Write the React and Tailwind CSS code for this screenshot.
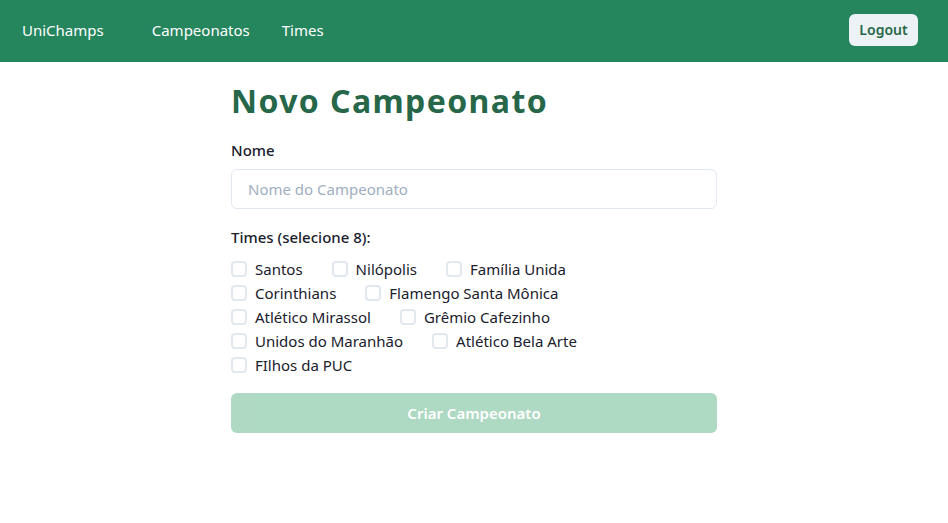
import React, { useState } from 'react';

const rows = [
  ['Santos', 'Nilópolis', 'Família Unida'],
  ['Corinthians', 'Flamengo Santa Mônica'],
  ['Atlético Mirassol', 'Grêmio Cafezinho'],
  ['Unidos do Maranhão', 'Atlético Bela Arte'],
  ['FIlhos da PUC'],
];

function App() {
  const [nome, setNome] = useState('');
  const [selected, setSelected] = useState([]);

  const toggle = (time) => {
    setSelected((prev) =>
      prev.includes(time) ? prev.filter((t) => t !== time) : [...prev, time]
    );
  };

  const podeCriar = nome.trim() !== '' && selected.length === 8;

  return (
    <div className="min-h-screen bg-white text-[#1a202c] font-['Noto_Sans',sans-serif]">
      <nav className="h-[62px] bg-[#25855d] flex items-center px-[22px] pb-[2px] text-white">
        <span className="text-[15px]">UniChamps</span>
        <a className="ml-[48px] text-[15px] cursor-pointer">Campeonatos</a>
        <a className="ml-8 text-[15px] cursor-pointer">Times</a>
        <button className="ml-auto mr-2 h-8 w-[69px] rounded-md bg-[#edf2f7] text-[#276749] text-sm font-semibold">
          Logout
        </button>
      </nav>

      <div className="w-[486px] mx-auto pt-5">
        <h1 className="text-[32px] leading-[1.2] font-bold tracking-[1.4px] text-[#276749] mb-[18px]">
          Novo Campeonato
        </h1>

        <label className="block text-[15px] font-medium leading-6 mb-[7px]">Nome</label>
        <input
          value={nome}
          onChange={(e) => setNome(e.target.value)}
          placeholder="Nome do Campeonato"
          className="w-full h-10 px-4 rounded-md border border-[#e2e8f0] text-[15px] outline-none placeholder:text-[#a0aec0]"
        />

        <label className="block mt-4 text-[15px] font-medium leading-6 mb-2">Times (selecione 8):</label>
        <div className="flex flex-col">
          {rows.map((row, i) => (
            <div key={i} className="flex items-center h-6 gap-[29px]">
              {row.map((time) => (
                <label key={time} className="flex items-center gap-2 cursor-pointer">
                  <input
                    type="checkbox"
                    checked={selected.includes(time)}
                    onChange={() => toggle(time)}
                    className="appearance-none w-4 h-4 rounded-sm border-2 border-[#e2e8f0] bg-white checked:bg-[#38a169] checked:border-[#38a169]"
                  />
                  <span className="text-[15px]">{time}</span>
                </label>
              ))}
            </div>
          ))}
        </div>

        <button
          disabled={!podeCriar}
          className="mt-4 w-full h-10 rounded-md bg-[#38a169] text-white font-semibold text-[15px] disabled:opacity-40"
        >
          Criar Campeonato
        </button>
      </div>
    </div>
  );
}

export default App;
